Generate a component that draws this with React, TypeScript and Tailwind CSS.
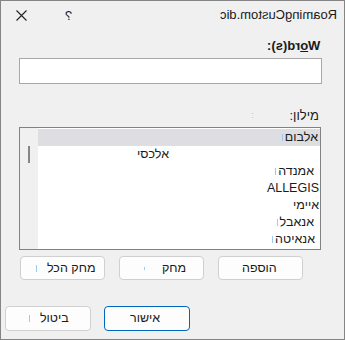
import React from 'react';

const rows = [
  { text: 'אלבום', pad: 'pr-[2px]', mark: true, selected: true },
  { text: 'אלכסי', pad: 'pr-[151px]', mark: false, selected: false },
  { text: 'אמנדה', pad: 'pr-[6px]', mark: true, selected: false },
  { text: 'ALLEGIS', pad: 'pr-[1px]', mark: false, selected: false },
  { text: 'איימי', pad: 'pr-[1px]', mark: false, selected: false },
  { text: 'אנאבל', pad: 'pr-[6px]', mark: true, selected: false },
  { text: 'אנאיטה', pad: 'pr-[5px]', mark: true, selected: false },
];

function Mark() {
  return <span className="inline-block w-px h-[7px] bg-[#9ccbee]" />;
}

export default function App() {
  return (
    <div
      className="w-[345px] h-[340px] border border-[#858585] bg-[#f0f0f0] flex flex-col text-[12px] text-[#1a1a1a] overflow-hidden"
      style={{ fontFamily: '"Liberation Sans", "DejaVu Sans", Arial, sans-serif' }}
    >
      {/* title bar */}
      <div className="h-[28px] flex items-center shrink-0">
        <svg className="ml-[15px]" width="11" height="11" viewBox="0 0 11 11">
          <path d="M0.5 0.5 L10.5 10.5 M10.5 0.5 L0.5 10.5" stroke="#222" strokeWidth="1.1" />
        </svg>
        <span className="ml-[38px] -scale-x-100 text-[13px] leading-none">?</span>
        <div className="flex-1 flex justify-end pr-[7px]">
          <span className="-scale-x-100 text-[13px]">RoamingCustom.dic</span>
        </div>
      </div>

      {/* Word(s) label */}
      <div className="mt-[9px] flex justify-end pr-[24px] h-[16px] items-center">
        <span className="-scale-x-100 font-bold text-[13px]">
          W<span className="underline">o</span>rd(s):
        </span>
      </div>

      <div className="mt-[4px] ml-[18px] w-[303px] h-[26px] bg-white border border-[#a8a8a8]" />

      {/* dictionary label */}
      <div className="mt-[24px] h-[16px] flex items-center justify-end pr-[25px]">
        <span className="text-[9px] text-[#8fc6ee] mr-[36px]">:</span>
        <span dir="rtl" className="text-[13px]">מילון:</span>
      </div>

      {/* list box */}
      <div className="mt-[3px] ml-[18px] w-[302px] h-[123px] bg-white border border-[#828282] flex">
        <div className="w-[18px] bg-[#f0f0f0] flex justify-center pt-[18px]">
          <div className="w-[2px] h-[17px] bg-[#858585]" />
        </div>
        <div className="flex-1 flex flex-col pt-px">
          {rows.map((r) => (
            <div
              key={r.text}
              className={`h-[17px] flex items-center justify-end ${r.pad} ${r.selected ? 'bg-[#dddde2]' : ''}`}
            >
              {r.mark && <span className="mr-[2px] flex items-center"><Mark /></span>}
              <span className="text-[12.5px] leading-none">{r.text}</span>
            </div>
          ))}
        </div>
      </div>

      {/* edit buttons */}
      <div className="mt-[6px] ml-[19px] flex gap-[14px]">
        <button className="w-[85px] h-[24px] rounded-[4px] border border-[#d0d0d0] bg-[#fdfdfd] flex items-center pl-[15px]">
          <Mark />
          <span className="ml-[10px] text-[12.5px]">מחק הכל</span>
        </button>
        <button className="w-[85px] h-[24px] rounded-[4px] border border-[#d0d0d0] bg-[#fdfdfd] flex items-center pl-[24px]">
          <span className="w-px h-[3px] bg-[#9ccbee]" />
          <span className="ml-[17px] text-[12.5px]">מחק</span>
        </button>
        <button className="w-[85px] h-[24px] rounded-[4px] border border-[#d0d0d0] bg-[#fdfdfd] flex items-center pl-[23px]">
          <span className="text-[12.5px]">הוספה</span>
        </button>
      </div>

      {/* dialog buttons */}
      <div className="mt-[26px] ml-[4px] flex gap-[13px]">
        <button className="w-[86px] h-[25px] rounded-[4px] border border-[#d0d0d0] bg-[#fdfdfd] flex items-center pl-[23px]">
          <Mark />
          <span className="ml-[10px] text-[12.5px]">ביטול</span>
        </button>
        <button className="w-[86px] h-[25px] rounded-[4px] border border-[#0067c0] bg-[#fdfdfd] flex items-center pl-[25px]">
          <span className="text-[12.5px]">אישור</span>
        </button>
      </div>
    </div>
  );
}
